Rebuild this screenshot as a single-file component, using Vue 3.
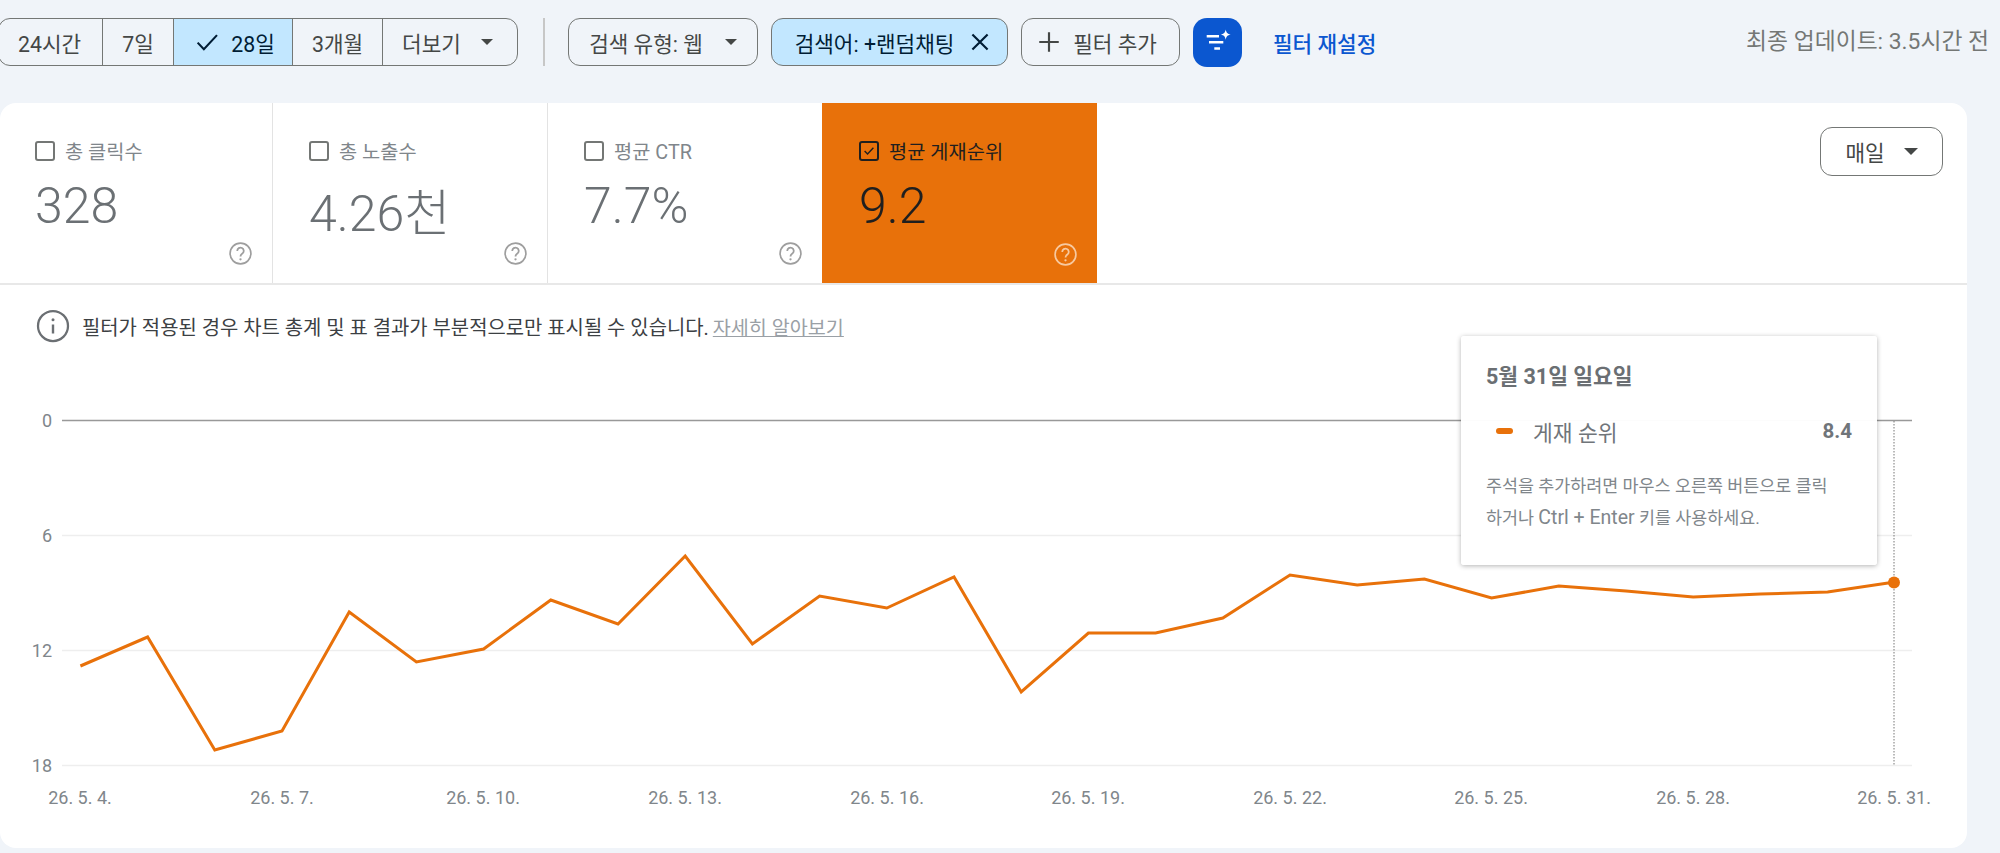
<script setup>
const dates = [
  { label: '24시간' },
  { label: '7일' },
  { label: '28일', active: true },
  { label: '3개월' },
]

const tabs = [
  { label: '총 클릭수', value: '328' },
  { label: '총 노출수', value: '4.26천', low: true },
  { label: '평균 CTR', value: '7.7%' },
  { label: '평균 게재순위', value: '9.2', active: true },
]

const ys = [666, 637, 750, 731, 612, 662, 649, 600, 624, 556, 644, 596, 608, 577, 692, 633, 633, 618, 575, 585, 579, 598, 586, 591, 597, 594, 592, 582]
const points = ys.map((y, i) => `${(80.4 + i * 67.2).toFixed(1)},${y}`).join(' ')

const grid = [
  { label: '0', y: 420.5, zero: true },
  { label: '6', y: 535.5 },
  { label: '12', y: 650.5 },
  { label: '18', y: 765.5 },
]

const ticks = [
  { label: '26. 5. 4.', x: 80 },
  { label: '26. 5. 7.', x: 282 },
  { label: '26. 5. 10.', x: 483 },
  { label: '26. 5. 13.', x: 685 },
  { label: '26. 5. 16.', x: 887 },
  { label: '26. 5. 19.', x: 1088 },
  { label: '26. 5. 22.', x: 1290 },
  { label: '26. 5. 25.', x: 1491 },
  { label: '26. 5. 28.', x: 1693 },
  { label: '26. 5. 31.', x: 1894 },
]
</script>

<template>
  <div class="page">
    <div class="toolbar">
      <div class="segments">
        <div
          v-for="d in dates"
          :key="d.label"
          class="seg"
          :class="{ active: d.active }"
        >
          <svg v-if="d.active" class="seg-check" viewBox="0 0 24 24" width="30" height="30">
            <path d="M4.500 12.500l5 5.300L20 6.500" fill="none" stroke="#001d35" stroke-width="1.700" />
          </svg>
          {{ d.label }}
        </div>
        <div class="seg more">더보기 <span class="caret"></span></div>
      </div>
      <div class="vline"></div>
      <div class="chip type">검색 유형: 웹 <span class="caret"></span></div>
      <div class="chip query">
        검색어: +랜덤채팅
        <svg viewBox="0 0 24 24" width="26" height="26">
          <path d="M5 5l14 14M19 5L5 19" fill="none" stroke="#001d35" stroke-width="2" />
        </svg>
      </div>
      <div class="chip add">
        <svg viewBox="0 0 24 24" width="26" height="26">
          <path d="M12 3v18M3 12h18" fill="none" stroke="#444746" stroke-width="2" />
        </svg>
        필터 추가
      </div>
      <div class="ai-btn">
        <svg viewBox="0 0 49 49" width="49" height="49">
          <path d="M13.700 18.300H26M16 24.300h14.300M21.300 30.600H27" fill="none" stroke="#fff" stroke-width="2.500" />
          <path d="M32.700 11.500c.7 3.300 1.800 4.400 5 5.100-3.200.7-4.300 1.800-5 5.100-.7-3.300-1.800-4.400-5-5.100 3.200-.7 4.300-1.800 5-5.100z" fill="#fff" />
        </svg>
      </div>
      <div class="reset">필터 재설정</div>
      <div class="updated">최종 업데이트: 3.5시간 전</div>
    </div>

    <div class="card">
      <div class="tabs-row">
        <div
          v-for="t in tabs"
          :key="t.label"
          class="tab"
          :class="{ active: t.active }"
        >
          <div class="tab-label">
            <span class="box">
              <svg v-if="t.active" viewBox="0 0 20 20" width="18" height="18">
                <path d="M4.500 10l3.700 3.700L15.500 6" fill="none" stroke="#1f1f1f" stroke-width="1.800" />
              </svg>
            </span>
            {{ t.label }}
          </div>
          <div class="tab-value" :class="{ low: t.low }">{{ t.value }}</div>
          <svg class="help" viewBox="0 0 24 24" width="25" height="25">
            <circle cx="12" cy="12" r="10" fill="none" stroke="currentColor" stroke-width="1.600" />
            <path d="M8.900 9.500a3.100 3.100 0 1 1 4.900 2.500c-1.100.8-1.800 1.400-1.800 2.900" fill="none" stroke="currentColor" stroke-width="1.700" />
            <circle cx="12" cy="17.600" r="1.100" fill="currentColor" />
          </svg>
        </div>
        <div class="period">매일 <span class="caret big"></span></div>
      </div>

      <div class="notice">
        <svg viewBox="0 0 24 24" width="36" height="36">
          <circle cx="12" cy="12" r="10" fill="none" stroke="#6b6f73" stroke-width="1.500" />
          <path d="M12 11v6" stroke="#6b6f73" stroke-width="1.600" />
          <circle cx="12" cy="7.800" r="1" fill="#6b6f73" />
        </svg>
        <span>필터가 적용된 경우 차트 총계 및 표 결과가 부분적으로만 표시될 수 있습니다.</span>
        <span class="link">자세히 알아보기</span>
      </div>

      <svg class="chart" width="2000" height="853" viewBox="0 0 2000 853">
        <g v-for="g in grid" :key="g.label">
          <line x1="62" x2="1912" :y1="g.y" :y2="g.y" :stroke="g.zero ? '#999' : '#eeeeee'" stroke-width="1.500" />
          <text x="52" :y="g.y + 6.500" text-anchor="end" class="axis">{{ g.label }}</text>
        </g>
        <text
          v-for="t in ticks"
          :key="t.label"
          :x="t.x"
          y="804"
          text-anchor="middle"
          class="axis"
        >{{ t.label }}</text>
        <line x1="1894" x2="1894" y1="421" y2="765" stroke="#777" stroke-width="1" stroke-dasharray="1.500 1.500" />
        <polyline :points="points" fill="none" stroke="#e8710a" stroke-width="3" stroke-linejoin="miter" />
        <circle cx="1894" cy="582.500" r="6" fill="#e8710a" />
      </svg>

      <div class="tooltip">
        <div class="tip-title">5월 31일 일요일</div>
        <div class="tip-row">
          <span class="tip-mark"></span>
          <span class="tip-name">게재 순위</span>
          <span class="tip-val">8.4</span>
        </div>
        <p class="tip-desc">주석을 추가하려면 마우스 오른쪽 버튼으로 클릭<br />하거나 <span class="tip-latin">Ctrl + Enter</span> 키를 사용하세요.</p>
      </div>
    </div>
  </div>
</template>

<style scoped>
.page {
  width: 2000px;
  height: 853px;
  overflow: hidden;
  background: #f0f4f9;
  font-family: Roboto, "Noto Sans CJK KR", sans-serif;
  color: #1f1f1f;
}

.toolbar {
  display: flex;
  align-items: center;
  height: 48px;
  padding: 18px 11px 37px 0;
  font-size: 21.3px;
  color: #444746;
  white-space: nowrap;
}

.segments {
  display: flex;
  height: 48px;
  width: 520px;
  margin-left: -2px;
  box-sizing: border-box;
  border: 1px solid #747775;
  border-radius: 12px;
  overflow: hidden;
  flex: none;
}

.seg {
  display: flex;
  align-items: center;
  justify-content: center;
  border-right: 1px solid #747775;
  box-sizing: border-box;
  flex: none;
}
.seg:nth-child(1) { width: 104px; padding-right: 2px; }
.seg:nth-child(2) { width: 71px; }
.seg:nth-child(3) { width: 119px; gap: 9px; padding-left: 1px; }
.seg:nth-child(4) { width: 90px; }
.seg.active { background: #c2e7ff; color: #001d35; }
.seg.more { border-right: none; flex: 1; gap: 20px; padding-right: 5px; }

.caret {
  display: inline-block;
  width: 0;
  height: 0;
  border-left: 6px solid transparent;
  border-right: 6px solid transparent;
  border-top: 6px solid #444746;
}
.caret.big {
  border-left-width: 7px;
  border-right-width: 7px;
  border-top-width: 7px;
}

.vline {
  width: 2px;
  height: 48px;
  margin: 0 23px 0 25px;
  background: #c7c7c7;
  flex: none;
}

.chip {
  display: flex;
  align-items: center;
  justify-content: center;
  height: 48px;
  box-sizing: border-box;
  border: 1px solid #747775;
  border-radius: 12px;
  flex: none;
}
.chip.type { width: 190px; gap: 22px; margin-right: 13px; }
.chip.query {
  width: 237px;
  gap: 13px;
  margin-right: 13px;
  padding-left: 9px;
  background: #c2e7ff;
  color: #001d35;
}
.chip.add { width: 159px; gap: 11px; margin-right: 13px; padding-right: 8px; }

.ai-btn {
  display: flex;
  align-items: center;
  justify-content: center;
  width: 49px;
  height: 49px;
  margin-right: 31px;
  border-radius: 14px;
  background: #0b57d0;
  flex: none;
}

.reset { color: #0b57d0; font-weight: 500; }
.updated { margin-left: auto; margin-bottom: 5px; color: #747775; font-size: 22.8px; }

.card {
  position: relative;
  width: 1967px;
  height: 745px;
  background: #fff;
  border-radius: 16px;
}

.tabs-row {
  display: flex;
  height: 182px;
  box-sizing: border-box;
  border-bottom: 2px solid #e8e8e8;
  overflow: hidden;
  border-top-left-radius: 16px;
}

.tab {
  position: relative;
  width: 275px;
  box-sizing: border-box;
  padding: 36px 0 0 36px;
  border-right: 1px solid #e3e3e3;
  color: #80868b;
  flex: none;
}
.tab:nth-child(1) { width: 273px; padding-left: 35px; }
.tab:nth-child(3) { width: 274px; border-right: none; }
.tab.active {
  height: 181px;
  padding-left: 37px;
  background: #e8710a;
  color: #1f1f1f;
  border-right: none;
}

.tab-label {
  display: flex;
  align-items: center;
  gap: 10px;
  height: 22px;
  font-size: 19.8px;
}

.box {
  position: relative;
  top: 1px;
  display: flex;
  align-items: center;
  justify-content: center;
  width: 20px;
  height: 20px;
  box-sizing: border-box;
  border: 2px solid #747775;
  border-radius: 3px;
}
.tab.active .box { border-color: #1f1f1f; }

.tab-value {
  margin-top: 18px;
  font-size: 50px;
  font-weight: 300;
  line-height: 54px;
  color: #6b7074;
}
.tab-value.low { margin-top: 26px; }
.tab.active .tab-value { color: #1f1f1f; }

.help {
  position: absolute;
  right: 19px;
  bottom: 17px;
  color: #9e9e9e;
}
.tab.active .help { color: #f7c9a0; }

.period {
  display: flex;
  align-items: center;
  justify-content: center;
  gap: 19px;
  width: 123px;
  height: 49px;
  box-sizing: border-box;
  margin: 24px 24px 0 auto;
  border: 1px solid #747775;
  border-radius: 12px;
  font-size: 21.3px;
  color: #444746;
}

.notice {
  display: flex;
  align-items: center;
  gap: 11px;
  height: 36px;
  padding: 23px 0 0 35px;
  font-size: 19.9px;
  color: #3c4043;
}
.link {
  margin-left: -7px;
  font-size: 19.6px;
  color: #9aa0a6;
  text-decoration: underline;
}

/* 차트는 페이지 좌표를 그대로 사용 */
.chart {
  position: absolute;
  left: 0;
  top: -103px;
  pointer-events: none;
}
.axis {
  font-family: Roboto, sans-serif;
  font-size: 18px;
  fill: #80868b;
}

.tooltip {
  position: absolute;
  left: 1461px;
  top: 233px;
  width: 416px;
  height: 229px;
  box-sizing: border-box;
  padding: 28px 25px 0;
  background: rgba(255, 255, 255, 0.97);
  border-radius: 3px;
  box-shadow: 0 1px 5px rgba(0, 0, 0, 0.3);
}

.tip-title {
  font-size: 21.5px;
  font-weight: 700;
  line-height: 26px;
  color: #6b6f73;
}

.tip-row {
  display: flex;
  align-items: center;
  margin-top: 27px;
  height: 28px;
  padding-left: 10px;
}

.tip-mark {
  width: 17px;
  height: 6px;
  border-radius: 3px;
  background: #e8710a;
  margin-right: 20px;
}

.tip-name {
  font-size: 21.5px;
  color: #70757a;
}

.tip-val {
  margin-left: auto;
  font-size: 20.5px;
  font-weight: 700;
  color: #70757a;
}

.tip-desc {
  margin: 26px 0 0;
  font-size: 17.4px;
  line-height: 31px;
  color: #80868b;
}
.tip-latin { font-size: 19.5px; }
</style>
